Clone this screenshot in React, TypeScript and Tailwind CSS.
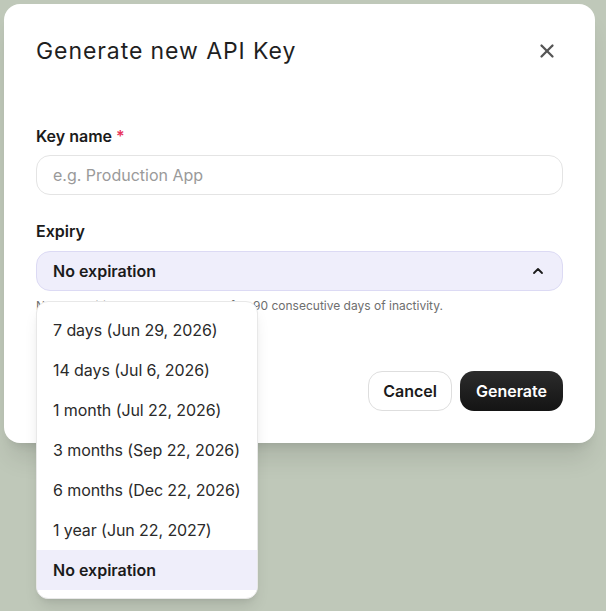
import { X, ChevronUp } from "lucide-react";

const options = [
  "7 days (Jun 29, 2026)",
  "14 days (Jul 6, 2026)",
  "1 month (Jul 22, 2026)",
  "3 months (Sep 22, 2026)",
  "6 months (Dec 22, 2026)",
  "1 year (Jun 22, 2027)",
  "No expiration",
];

export default function App() {
  const selected = "No expiration";

  return (
    <div className="h-[611px] w-full overflow-hidden bg-[#bfc8b9] p-1 font-['Inter',sans-serif] text-[#1b1b1b]">
      <div className="w-[591px] rounded-2xl bg-white px-8 pt-[31px] pb-8 shadow-xl">
        {/* header */}
        <div className="flex items-center justify-between">
          <h2 className="text-[23px] leading-7 font-normal tracking-[0.04em] text-[#1f1f1f]">Generate new API Key</h2>
          <button className="flex h-8 w-8 items-center justify-center text-[#555]">
            <X size={22} strokeWidth={2.5} />
          </button>
        </div>

        {/* key name */}
        <label className="mt-[59px] mb-[9px] block text-base leading-5 font-semibold">
          Key name <span className="text-[#e8365d]">*</span>
        </label>
        <div className="flex h-10 items-center rounded-[14px] border border-[#e4e4e4] px-4 text-base text-[#9a9a9a]">
          e.g. Production App
        </div>

        {/* expiry */}
        <label className="mt-[26px] mb-2.5 block text-base leading-5 font-semibold">Expiry</label>
        <div className="relative">
          <div className="flex h-10 items-center justify-between rounded-[14px] border border-[#dcdaf4] bg-[#efeefb] pl-4 pr-4 text-base font-semibold">
            <span>{selected}</span>
            <ChevronUp size={16} strokeWidth={2.75} />
          </div>

          <div className="absolute left-0 top-[calc(100%+10px)] z-10 w-[222px] rounded-xl border border-[#e8e8e8] bg-white py-2 shadow-lg">
            {options.map((opt) => (
              <div
                key={opt}
                className={
                  opt === selected
                    ? "flex h-10 items-center whitespace-nowrap bg-[#efeefa] px-4 text-base font-semibold"
                    : "flex h-10 items-center whitespace-nowrap px-4 text-base tracking-[-0.005em] text-[#2a2a2a]"
                }
              >
                {opt}
              </div>
            ))}
          </div>
        </div>
        <p className="mt-[7px] text-xs leading-4 text-[#6e6e6e]">
          Never-expiring keys are revoked after 90 consecutive days of inactivity.
        </p>

        {/* actions */}
        <div className="mt-[57px] flex justify-end gap-2">
          <button className="h-10 rounded-[14px] border border-[#dedede] bg-white px-[14px] text-base font-semibold">
            Cancel
          </button>
          <button className="h-10 rounded-[14px] bg-gradient-to-b from-[#2c2c2c] to-[#141414] px-4 text-base font-semibold text-white">
            Generate
          </button>
        </div>
      </div>
    </div>
  );
}
